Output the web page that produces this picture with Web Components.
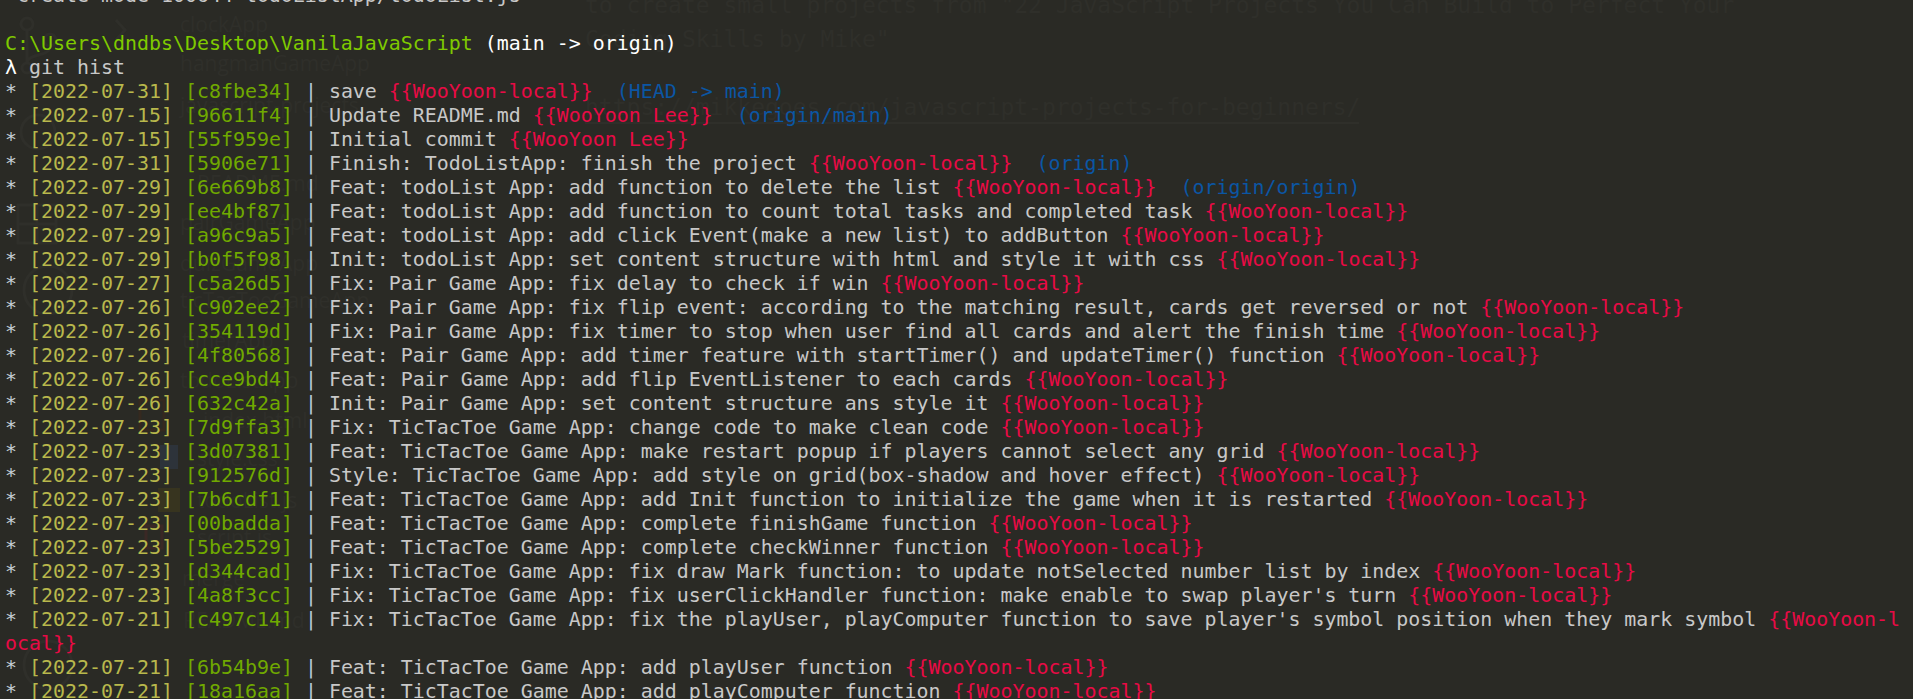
<!DOCTYPE html>
<html>
<head>
<meta charset="utf-8">
<title>cmder</title>
<style>
    html, body { margin: 0; padding: 0; background: #2a2a25; overflow: hidden; }
</style>
</head>
<body>
<terminal-window>
    <ghost-window slot="ghost"></ghost-window>
    <plain-line text=" create mode 100644 todoListApp/todoList.js"></plain-line>
    <plain-line text=" "></plain-line>
    <prompt-line path="C:\Users\dndbs\Desktop\VanilaJavaScript" branch="(main -> origin)"></prompt-line>
    <command-line text="git hist"></command-line>
    <commit-list></commit-list>
</terminal-window>

<script>
const COMMITS = [
    ['2022-07-31', 'c8fbe34', 'save', 'WooYoon-local', '(HEAD -> main)'],
    ['2022-07-15', '96611f4', 'Update README.md', 'WooYoon Lee', '(origin/main)'],
    ['2022-07-15', '55f959e', 'Initial commit', 'WooYoon Lee'],
    ['2022-07-31', '5906e71', 'Finish: TodoListApp: finish the project', 'WooYoon-local', '(origin)'],
    ['2022-07-29', '6e669b8', 'Feat: todoList App: add function to delete the list', 'WooYoon-local', '(origin/origin)'],
    ['2022-07-29', 'ee4bf87', 'Feat: todoList App: add function to count total tasks and completed task', 'WooYoon-local'],
    ['2022-07-29', 'a96c9a5', 'Feat: todoList App: add click Event(make a new list) to addButton', 'WooYoon-local'],
    ['2022-07-29', 'b0f5f98', 'Init: todoList App: set content structure with html and style it with css', 'WooYoon-local'],
    ['2022-07-27', 'c5a26d5', 'Fix: Pair Game App: fix delay to check if win', 'WooYoon-local'],
    ['2022-07-26', 'c902ee2', 'Fix: Pair Game App: fix flip event: according to the matching result, cards get reversed or not', 'WooYoon-local'],
    ['2022-07-26', '354119d', 'Fix: Pair Game App: fix timer to stop when user find all cards and alert the finish time', 'WooYoon-local'],
    ['2022-07-26', '4f80568', 'Feat: Pair Game App: add timer feature with startTimer() and updateTimer() function', 'WooYoon-local'],
    ['2022-07-26', 'cce9bd4', 'Feat: Pair Game App: add flip EventListener to each cards', 'WooYoon-local'],
    ['2022-07-26', '632c42a', 'Init: Pair Game App: set content structure ans style it', 'WooYoon-local'],
    ['2022-07-23', '7d9ffa3', 'Fix: TicTacToe Game App: change code to make clean code', 'WooYoon-local'],
    ['2022-07-23', '3d07381', 'Feat: TicTacToe Game App: make restart popup if players cannot select any grid', 'WooYoon-local'],
    ['2022-07-23', '912576d', 'Style: TicTacToe Game App: add style on grid(box-shadow and hover effect)', 'WooYoon-local'],
    ['2022-07-23', '7b6cdf1', 'Feat: TicTacToe Game App: add Init function to initialize the game when it is restarted', 'WooYoon-local'],
    ['2022-07-23', '00badda', 'Feat: TicTacToe Game App: complete finishGame function', 'WooYoon-local'],
    ['2022-07-23', '5be2529', 'Feat: TicTacToe Game App: complete checkWinner function', 'WooYoon-local'],
    ['2022-07-23', 'd344cad', 'Fix: TicTacToe Game App: fix draw Mark function: to update notSelected number list by index', 'WooYoon-local'],
    ['2022-07-23', '4a8f3cc', "Fix: TicTacToe Game App: fix userClickHandler function: make enable to swap player's turn", 'WooYoon-local'],
    ['2022-07-21', 'c497c14', "Fix: TicTacToe Game App: fix the playUser, playComputer function to save player's symbol position when they mark symbol", 'WooYoon-local'],
    ['2022-07-21', '6b54b9e', 'Feat: TicTacToe Game App: add playUser function', 'WooYoon-local'],
    ['2022-07-21', '18a16aa', 'Feat: TicTacToe Game App: add playComputer function', 'WooYoon-local']
];

const LINE_STYLE = `
    :host {
        display: block;
        min-height: 24px;
        line-height: 24px;
    }
    div.row {
        white-space: pre-wrap;
        word-break: break-all;
    }
`;

class TerminalWindow extends HTMLElement {
    constructor() {
        super();
        this.shadowroot = this.attachShadow({mode: 'open'});
        this.shadowroot.innerHTML = `
            <style>
                :host {
                    display: block;
                    position: relative;
                    width: 1913px;
                    height: 699px;
                    overflow: hidden;
                    background: #2a2a25;
                    color: #c8c8c8;
                    font-family: "DejaVu Sans Mono", "Liberation Mono", monospace;
                    font-size: 19.93px;
                }
                div#lines {
                    position: relative;
                    display: flex;
                    flex-direction: column;
                    margin-top: -16px;
                    padding-left: 5px;
                    width: 1900px;
                }
            </style>
            <slot name="ghost"></slot>
            <div id="lines"><slot></slot></div>
        `;
    }
}

class PlainLine extends HTMLElement {
    constructor() {
        super();
        this.shadowroot = this.attachShadow({mode: 'open'});
    }
    connectedCallback() {
        this.shadowroot.innerHTML = `<style>${LINE_STYLE}</style><div class="row">${this.getAttribute('text')}</div>`;
    }
}

class PromptLine extends HTMLElement {
    constructor() {
        super();
        this.shadowroot = this.attachShadow({mode: 'open'});
    }
    connectedCallback() {
        this.shadowroot.innerHTML = `
            <style>${LINE_STYLE}
                span.path { color: #7fc900; }
                span.branch { color: #ffffff; }
            </style>
            <div class="row"><span class="path">${this.getAttribute('path')}</span> <span class="branch">${this.getAttribute('branch').replace('>', '&gt;')}</span></div>`;
    }
}

class CommandLine extends HTMLElement {
    constructor() {
        super();
        this.shadowroot = this.attachShadow({mode: 'open'});
    }
    connectedCallback() {
        this.shadowroot.innerHTML = `
            <style>${LINE_STYLE}
                span.lambda { color: #ffffff; }
            </style>
            <div class="row"><span class="lambda">λ</span> ${this.getAttribute('text')}</div>`;
    }
}

class CommitList extends HTMLElement {
    constructor() {
        super();
        this.shadowroot = this.attachShadow({mode: 'open'});
    }
    connectedCallback() {
        let html = `
            <style>${LINE_STYLE}
                .star { color: #c5ced6; }
                .date { color: #b8b84c; }
                .hash { color: #70a900; }
                .pipe { color: #b4c8d8; }
                .author { color: #e80a45; }
                .ref { color: #0b56a4; }
            </style>`;
        for(let [date, hash, message, author, ref] of COMMITS){
            html += `<div class="row"><span class="star">*</span> <span class="date">[${date}]</span> <span class="hash">[${hash}]</span> <span class="pipe">|</span> ${message} <span class="author">{{${author}}}</span>${ref ? `  <span class="ref">${ref.replace('>', '&gt;')}</span>` : ''}</div>`;
        }
        this.shadowroot.innerHTML = html;
    }
}

// the window behind the translucent terminal, barely showing through
class GhostWindow extends HTMLElement {
    constructor() {
        super();
        this.shadowroot = this.attachShadow({mode: 'open'});
        const files = [
            ['clockApp', 180, 24], ['hangmanGameApp', 180, 63], ['javascript-projects', 180, 105],
            ['README.md', 197, 183], ['pairGameApp', 180, 222], ['quizGameApp', 180, 263],
            ['ticTacToeGameApp', 180, 300], ['timerApp', 182, 340], ['todoListApp', 180, 380],
            ['index.html', 203, 420], ['style.css', 197, 458], ['todoList.js', 197, 500],
            ['script.js', 197, 537], ['merge', 182, 578], ['README.md', 183, 620]
        ];
        this.shadowroot.innerHTML = `
            <style>
                :host {
                    display: block;
                    position: absolute;
                    inset: 0;
                    color: #2f2f2a;
                    font-family: "DejaVu Sans Mono", monospace;
                    font-size: 23px;
                    white-space: pre;
                }
                div.file {
                    position: absolute;
                    font-family: "Open Sans", sans-serif;
                    font-size: 21px;
                    line-height: 28px;
                }
                div.note { position: absolute; left: 585px; line-height: 28px; }
                div.rule { position: absolute; left: 585px; top: 122px; width: 774px; height: 2px; background: #2f2f2a; }
                svg { position: absolute; left: 0; top: 0; }
            </style>
            <svg width="190" height="699" fill="none" stroke="#2f2f2a" stroke-width="3">
                <circle cx="27" cy="24" r="6"/><circle cx="50" cy="40" r="6"/><path d="M27 30v34M50 46c0 12-23 6-23 18"/><circle cx="27" cy="68" r="5"/>
                <path d="M116 20l9 10-9 10"/>
                <circle cx="38" cy="132" r="17"/>
                <path d="M18 205h38v38H18zM18 224h38M37 205v38"/>
                <circle cx="48" cy="290" r="24"/>
                <path d="M140 400h24v30h-24z" stroke="#35291f"/>
                <path d="M160 445h18v24h-18z" fill="#2d333a" stroke="none"/>
                <path d="M158 488h22v24h-22z" fill="#37341f" stroke="none"/>
                <path d="M146 526h16v22h-16z" stroke="#3a2825"/>
                <circle cx="48" cy="665" r="24"/>
            </svg>
            ${files.map(([name, x, y]) => `<div class="file" style="left:${x}px;top:${y - 14}px">${name}</div>`).join('')}
            <div class="note" style="top:-9px">to create small projects from "22 JavaScript Projects You Can Build to Perfect Your</div>
            <div class="note" style="top:25px">Coding Skills by Mike"</div>
            <div class="note" style="top:93px">https://mikkegoes.com/javascript-projects-for-beginners/</div>
            <div class="rule"></div>
        `;
    }
}

customElements.define('terminal-window', TerminalWindow);
customElements.define('plain-line', PlainLine);
customElements.define('prompt-line', PromptLine);
customElements.define('command-line', CommandLine);
customElements.define('commit-list', CommitList);
customElements.define('ghost-window', GhostWindow);
</script>
</body>
</html>
